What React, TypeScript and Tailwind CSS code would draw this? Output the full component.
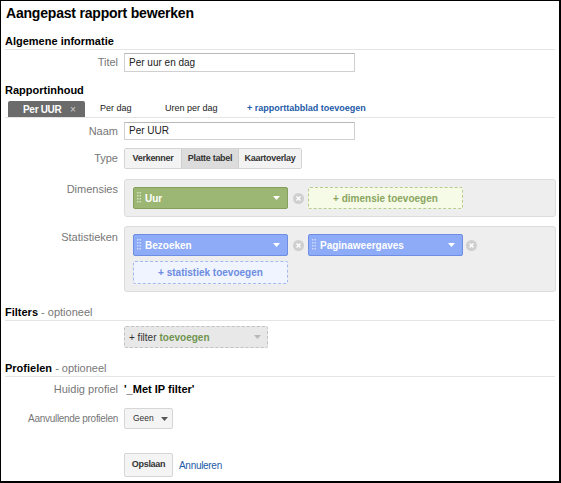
import React from "react";

function Grip() {
  return (
    <svg width="4" height="12" viewBox="0 0 4 12" className="shrink-0">
      {[0, 3, 6, 9].map((y) => (
        <g key={y} fill="rgba(255,255,255,0.55)">
          <rect x="0" y={y} width="1.5" height="1.5" />
          <rect x="2.5" y={y} width="1.5" height="1.5" />
        </g>
      ))}
    </svg>
  );
}

function Caret({ color = "#ffffff" }: { color?: string }) {
  return (
    <svg width="7" height="4" viewBox="0 0 7 4" className="shrink-0">
      <path d="M0 0h7L3.5 4z" fill={color} />
    </svg>
  );
}

function Remove() {
  return (
    <svg width="11" height="11" viewBox="0 0 11 11" className="shrink-0">
      <circle cx="5.5" cy="5.5" r="5.5" fill="#cfcfcf" />
      <path d="M3.5 3.5l4 4M7.5 3.5l-4 4" stroke="#fff" strokeWidth="1.4" />
    </svg>
  );
}

function Pill({ label, tone }: { label: string; tone: "green" | "blue" }) {
  const cls =
    tone === "green"
      ? "bg-[#9cb673] border-[#84a05a]"
      : "bg-[#8eabf7] border-[#6e8ee6]";
  return (
    <div
      className={`w-[155px] h-[22px] border rounded-[2px] flex items-center pl-[3px] pr-[7px] gap-[4px] ${cls}`}
    >
      <Grip />
      <span className="flex-1 text-white font-bold text-[10px]">{label}</span>
      <Caret />
    </div>
  );
}

function Section({ title, sub }: { title: string; sub?: string }) {
  return (
    <div className="mx-[4px] h-[17px] leading-[16px] border-b border-[#e5e5e5] text-[11px]">
      <span className="font-bold text-black">{title}</span>
      {sub && <span className="text-[#777]"> - {sub}</span>}
    </div>
  );
}

function Row({
  label,
  children,
  className = "",
  labelClass = "items-center",
}: {
  label: string;
  children: React.ReactNode;
  className?: string;
  labelClass?: string;
}) {
  return (
    <div className={`flex ${className}`}>
      <div className={`w-[117px] shrink-0 flex justify-end text-[11px] text-[#777] whitespace-nowrap ${labelClass}`}>
        {label}
      </div>
      <div className="ml-[6px] flex-1 flex items-start">{children}</div>
    </div>
  );
}

export default function App() {
  return (
    <div
      className="w-[561px] h-[483px] overflow-hidden bg-white border-l border-t border-r-2 border-b-2 border-black text-[#222] whitespace-nowrap"
      style={{ fontFamily: '"Liberation Sans", Arial, sans-serif' }}
    >
      <h1 className="pt-[1px] pl-[5px] leading-[22px] text-[14px] tracking-[-0.2px] font-bold text-black">
        Aangepast rapport bewerken
      </h1>

      <div className="mt-[9px]">
        <Section title="Algemene informatie" />
      </div>

      <Row label="Titel" className="mt-[3px] h-[19px]">
        <div className="w-[231px] h-[19px] border border-[#d0d0d0] border-t-[#b8b8b8] px-[4px] text-[10px] leading-[17px]">
          Per uur en dag
        </div>
      </Row>

      <div className="mt-[10px] mx-[4px] leading-[16px] text-[11px] font-bold text-black">
        Rapportinhoud
      </div>

      {/* Tabs */}
      <div className="mt-[3px] mx-[4px] border-b border-[#e5e5e5] flex items-end h-[17px] pl-[3px] text-[9px]">
        <div className="w-[77px] h-[16px] bg-[#6b6b6b] rounded-t-[2px] flex items-center pl-[15px] text-white font-bold">
          <span className="w-[47px] text-[10px] tracking-[-0.3px]">Per UUR</span>
          <span className="text-[#cfcfcf] font-normal text-[10px]">×</span>
        </div>
        <div className="h-[16px] w-[80px] flex items-center pl-[15px]">Per dag</div>
        <div className="h-[16px] w-[82px] flex items-center">Uren per dag</div>
        <div className="h-[16px] flex items-center text-[#1d5aa8] font-bold">
          + rapporttabblad toevoegen
        </div>
      </div>

      <Row label="Naam" className="mt-[4px] h-[18px]">
        <div className="w-[231px] h-[18px] border border-[#d0d0d0] border-t-[#b8b8b8] px-[4px] text-[10px] leading-[16px]">
          Per UUR
        </div>
      </Row>

      <Row label="Type" className="mt-[8px] h-[21px]" labelClass="items-start pt-[2px]">
        <div className="flex h-[21px] border border-[#d4d4d4] rounded-[2px] text-[9px] tracking-[-0.3px] font-bold text-[#333] overflow-hidden">
          <div className="w-[56px] flex items-center justify-center bg-[#f3f3f3]">Verkenner</div>
          <div className="w-[58px] flex items-center justify-center bg-[#dcdcdc] border-x border-[#cfcfcf]">
            Platte tabel
          </div>
          <div className="w-[62px] flex items-center justify-center bg-[#f3f3f3]">Kaartoverlay</div>
        </div>
      </Row>

      <Row label="Dimensies" className="mt-[10px]" labelClass="items-start pt-[2px]">
        <div className="w-[432px] h-[38px] bg-[#eeeeee] border border-[#dcdcdc] rounded-[3px] pl-[8px] pt-[7px] flex items-start">
          <Pill label="Uur" tone="green" />
          <div className="w-[20px] h-[22px] flex items-center justify-center">
            <Remove />
          </div>
          <div className="w-[155px] h-[22px] border border-dashed border-[#b7cb8e] bg-[#f6fbe8] rounded-[2px] flex items-center justify-center text-[10px] font-bold text-[#8aa55e]">
            + dimensie toevoegen
          </div>
        </div>
      </Row>

      <Row label="Statistieken" className="mt-[9px]" labelClass="items-start pt-[3px]">
        <div className="w-[432px] h-[66px] bg-[#eeeeee] border border-[#dcdcdc] rounded-[3px] pl-[8px] pt-[7px]">
          <div className="flex items-start">
            <Pill label="Bezoeken" tone="blue" />
            <div className="w-[20px] h-[22px] flex items-center justify-center">
              <Remove />
            </div>
            <Pill label="Paginaweergaves" tone="blue" />
            <div className="w-[16px] h-[22px] flex items-center justify-center">
              <Remove />
            </div>
          </div>
          <div className="mt-[5px] w-[155px] h-[23px] border border-dashed border-[#a5b8ef] bg-[#f0f4fe] rounded-[2px] flex items-center justify-center text-[10px] font-bold text-[#6d8ce2]">
            + statistiek toevoegen
          </div>
        </div>
      </Row>

      <div className="mt-[12px]">
        <Section title="Filters" sub="optioneel" />
      </div>

      <Row label="" className="mt-[5px]">
        <div className="w-[144px] h-[22px] border border-dashed border-[#c2c2c2] bg-[#e8e8e8] rounded-[2px] flex items-center pl-[4px] pr-[6px] text-[10px]">
          <span className="text-[#333]">+ filter</span>
          <span className="ml-[3px] font-bold text-[#6f9450] flex-1">toevoegen</span>
          <Caret color="#b8b8b8" />
        </div>
      </Row>

      <div className="mt-[12px]">
        <Section title="Profielen" sub="optioneel" />
      </div>

      <Row label="Huidig profiel" className="mt-[4px] h-[16px]">
        <div className="h-[16px] flex items-center text-[11px] font-bold text-black">'_Met IP filter'</div>
      </Row>

      <Row label="" className="mt-[11px]">
        <div className="-ml-[123px] w-[117px] pt-[3px] text-right text-[10px] tracking-[-0.3px] text-[#777]">
          Aanvullende profielen
        </div>
        <div className="ml-[6px] w-[49px] h-[21px] border border-[#d6d6d6] rounded-[2px] bg-[#f4f4f4] flex items-center pl-[8px] gap-[7px] text-[8.5px] text-[#333]">
          Geen
          <Caret color="#555" />
        </div>
      </Row>

      <Row label="" className="mt-[24px]">
        <div className="w-[49px] h-[24px] border border-[#d6d6d6] rounded-[2px] bg-[#f4f4f4] flex items-center justify-center text-[9px] tracking-[-0.3px] font-bold text-[#333]">
          Opslaan
        </div>
        <div className="ml-[6px] h-[24px] flex items-center text-[10px] tracking-[-0.3px] text-[#1d5aa8]">Annuleren</div>
      </Row>
    </div>
  );
}
